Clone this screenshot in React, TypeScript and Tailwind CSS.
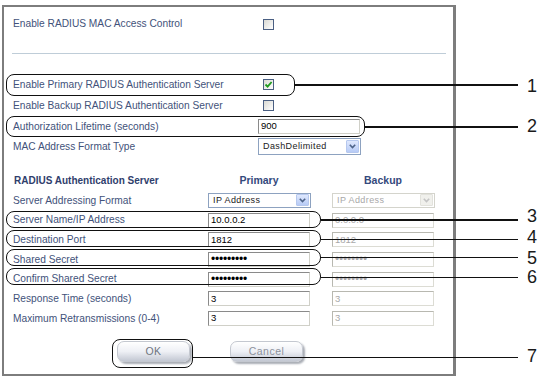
import React from 'react';

const labelCls = "text-[10.2px] text-[#42527a] whitespace-nowrap";

const CheckBox: React.FC<{ checked?: boolean }> = ({ checked }) => (
    <div className="ml-[5px] w-[11px] h-[11px] border border-[#4a5f82] bg-gradient-to-br from-[#d9d9d3] to-white flex items-center justify-center">
        {checked && (
            <svg width="9" height="9" viewBox="0 0 9 9">
                <path d="M1.5 4.5 L3.6 6.6 L7.6 2" stroke="#1f9a1f" strokeWidth="1.8" fill="none" />
            </svg>
        )}
    </div>
);

const TextBox: React.FC<{ value: string; disabled?: boolean; secret?: boolean }> = ({ value, disabled, secret }) => (
    <div className={`w-[102px] h-[15px] border bg-white flex items-center pl-[2px] overflow-hidden ${disabled ? 'border-[#dcdcd4] border-t-[#b8b8b0] border-l-[#b8b8b0] text-[#a8a8a8]' : 'border-[#d0d0c8] border-t-[#8a8a8a] border-l-[#8a8a8a] text-black'} ${secret ? 'text-[12px] leading-none tracking-[-0.2px]' : 'text-[9.5px]'}`}>
        {value}
    </div>
);

const SelectBox: React.FC<{ value: string; disabled?: boolean; tall?: boolean }> = ({ value, disabled, tall }) => (
    <div className={`w-[103px] ${tall ? 'h-[17px]' : 'h-[15px]'} border flex items-center justify-between bg-white pl-[4px] pr-[1px] ${disabled ? 'border-[#d4d4cc] text-[#a8a8a8]' : 'border-[#8da2c0] text-[#222]'}`}>
        <span className="text-[9px] tracking-[0.4px]">{value}</span>
        <div className={`w-[13px] ${tall ? 'h-[13px]' : 'h-[12px]'} flex items-center justify-center rounded-[1px] border ${disabled ? 'border-[#e2e2dc] bg-[#f0f0ec]' : 'border-[#b6c8ee] bg-gradient-to-b from-[#dfe8fd] to-[#b7cbf6]'}`}>
            <svg width="7" height="5" viewBox="0 0 7 5">
                <path d="M0.8 0.8 L3.5 3.6 L6.2 0.8" stroke={disabled ? '#c4c4c4' : '#4d6389'} strokeWidth="1.6" fill="none" />
            </svg>
        </div>
    </div>
);

const GlossButton: React.FC<{ label: string; faded?: boolean }> = ({ label, faded }) => (
    <div className={`w-[73px] h-[21px] rounded-[7px] border border-[#c4c8d0] bg-gradient-to-b from-white via-[#eef0f5] to-[#c3c8d3] shadow-[2px_2px_2px_#a9adb5] flex items-center justify-center text-[10.5px] tracking-[0.5px] ${faded ? 'text-[#8d929c]' : 'text-[#6f7480]'}`}>
        {label}
    </div>
);

const Callout: React.FC<{ n: string; box: string; line: string; num: string }> = ({ n, box, line, num }) => (
    <>
        <div className={`absolute border-[1.5px] border-[#111] rounded-[8px] ${box}`} />
        <div className={`absolute h-[1.5px] bg-[#111] ${line}`} />
        <div className={`absolute left-[527px] h-[14px] leading-[14px] text-[18px] text-[#1a1a1a] ${num}`}>{n}</div>
    </>
);

const serverRows = [
    { label: 'Server Name/IP Address', primary: '10.0.0.2', backup: '0.0.0.0' },
    { label: 'Destination Port', primary: '1812', backup: '1812' },
    { label: 'Shared Secret', primary: '•••••••••', backup: '••••••••', secret: true },
    { label: 'Confirm Shared Secret', primary: '•••••••••', backup: '••••••••', secret: true },
    { label: 'Response Time (seconds)', primary: '3', backup: '3' },
    { label: 'Maximum Retransmissions (0-4)', primary: '3', backup: '3' },
];

const App: React.FC = () => {
    return (
        <div className="relative w-[540px] h-[378px] bg-white overflow-hidden font-['Liberation_Sans',Arial,sans-serif]">
            <div className="pt-[5px] pl-[2px]">
                <div className="w-[454px] h-[371px] border-2 border-[#7d7d7d] border-r-[3px] flex flex-col pl-[9px]">
                    <div className="mt-[7px] h-[20px] grid grid-cols-[245px_1fr] items-center">
                        <span className={labelCls}>Enable RADIUS MAC Access Control</span>
                        <CheckBox />
                    </div>
                    <div className="mt-[19px] ml-[-1px] w-[434px] h-px bg-[#bfcdd8]" />

                    <div className="mt-[20px] h-[21px] grid grid-cols-[245px_1fr] items-center">
                        <span className={labelCls}>Enable Primary RADIUS Authentication Server</span>
                        <CheckBox checked />
                    </div>
                    <div className="h-[21px] grid grid-cols-[245px_1fr] items-center">
                        <span className={labelCls}>Enable Backup RADIUS Authentication Server</span>
                        <CheckBox />
                    </div>
                    <div className="h-[21px] grid grid-cols-[245px_1fr] items-center">
                        <span className={labelCls}>Authorization Lifetime (seconds)</span>
                        <TextBox value="900" />
                    </div>
                    <div className="h-[19px] grid grid-cols-[245px_1fr] items-center">
                        <span className={labelCls}>MAC Address Format Type</span>
                        <SelectBox value="DashDelimited" tall />
                    </div>

                    <div className="mt-[15px] h-[19.5px] grid grid-cols-[195px_102px_22px_102px] items-center font-bold">
                        <span className="text-[10px] text-[#2f3e6c] pl-px">RADIUS Authentication Server</span>
                        <span className="text-[10.5px] text-[#34497c] text-center">Primary</span>
                        <span />
                        <span className="text-[10.5px] text-[#34497c] text-center">Backup</span>
                    </div>
                    <div className="h-[19.7px] grid grid-cols-[195px_102px_22px_102px] items-center">
                        <span className={labelCls}>Server Addressing Format</span>
                        <SelectBox value="IP Address" />
                        <span />
                        <SelectBox value="IP Address" disabled />
                    </div>
                    {serverRows.map(r => (
                        <div key={r.label} className="h-[19.7px] grid grid-cols-[195px_102px_22px_102px] items-center">
                            <span className={labelCls}>{r.label}</span>
                            <TextBox value={r.primary} secret={r.secret} />
                            <span />
                            <TextBox value={r.backup} secret={r.secret} disabled />
                        </div>
                    ))}

                    <div className="mt-[13px] ml-[104px] flex gap-[40px]">
                        <GlossButton label="OK" />
                        <GlossButton label="Cancel" faded />
                    </div>
                </div>
            </div>

            <Callout n="1" box="left-[6px] top-[74px] w-[289px] h-[22px]" line="left-[295px] top-[84px] w-[223px]" num="top-[79px]" />
            <Callout n="2" box="left-[6px] top-[116px] w-[359px] h-[21px]" line="left-[365px] top-[126px] w-[153px]" num="top-[119px]" />
            <Callout n="3" box="left-[6px] top-[211px] w-[315px] h-[17px]" line="left-[321px] top-[219px] w-[197px]" num="top-[209px]" />
            <Callout n="4" box="left-[6px] top-[230px] w-[315px] h-[17px]" line="left-[321px] top-[238.5px] w-[197px]" num="top-[230px]" />
            <Callout n="5" box="left-[6px] top-[249px] w-[315px] h-[17px]" line="left-[321px] top-[256.5px] w-[197px]" num="top-[251px]" />
            <Callout n="6" box="left-[6px] top-[268px] w-[315px] h-[17px]" line="left-[321px] top-[276.5px] w-[197px]" num="top-[270px]" />
            <Callout n="7" box="left-[112px] top-[339px] w-[81px] h-[29px]" line="left-[193px] top-[356.5px] w-[325px]" num="top-[349px]" />
        </div>
    );
};

export default App;
